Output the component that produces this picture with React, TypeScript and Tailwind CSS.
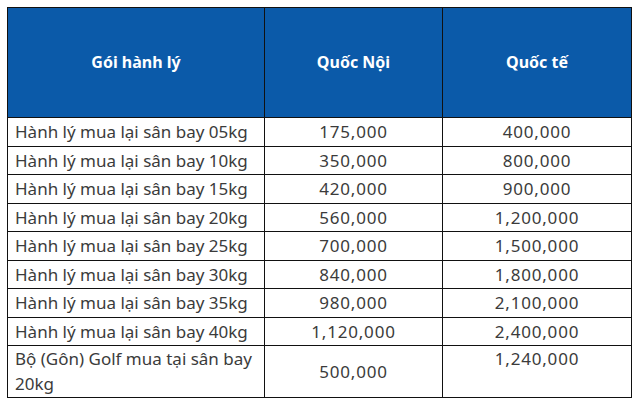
import React from 'react'

const rows = [
    { name: 'Hành lý mua lại sân bay 05kg', noi: '175,000', te: '400,000' },
    { name: 'Hành lý mua lại sân bay 10kg', noi: '350,000', te: '800,000' },
    { name: 'Hành lý mua lại sân bay 15kg', noi: '420,000', te: '900,000' },
    { name: 'Hành lý mua lại sân bay 20kg', noi: '560,000', te: '1,200,000' },
    { name: 'Hành lý mua lại sân bay 25kg', noi: '700,000', te: '1,500,000' },
    { name: 'Hành lý mua lại sân bay 30kg', noi: '840,000', te: '1,800,000' },
    { name: 'Hành lý mua lại sân bay 35kg', noi: '980,000', te: '2,100,000' },
    { name: 'Hành lý mua lại sân bay 40kg', noi: '1,120,000', te: '2,400,000' },
]

const App = () => {
    return (
        <div className="bg-white w-[636px] h-[410px] pt-[7px] pl-[7px] font-['Noto_Sans',sans-serif] text-[#3b3b3b]">
            <table className="border-collapse w-[624px] table-fixed text-[17px] leading-[25px]">
                <colgroup>
                    <col className="w-[257px]" />
                    <col className="w-[178px]" />
                    <col className="w-[189px]" />
                </colgroup>
                <thead>
                    <tr className="bg-[#0b5aa9] text-white font-bold text-[16px] h-[110px]">
                        <th className="border border-[#111] text-center">Gói hành lý</th>
                        <th className="border border-[#111] text-center">Quốc Nội</th>
                        <th className="border border-[#111] text-center">Quốc tế</th>
                    </tr>
                </thead>
                <tbody>
                    {rows.map(row => (
                        <tr key={row.name} className="h-[28.5px]">
                            <td className="border border-[#111] px-[7px] py-0 whitespace-nowrap">{row.name}</td>
                            <td className="border border-[#111] text-center py-0 tracking-[0.8px]">{row.noi}</td>
                            <td className="border border-[#111] text-center py-0 tracking-[0.8px]">{row.te}</td>
                        </tr>
                    ))}
                    <tr>
                        <td className="border border-[#111] px-[7px] pt-0 pb-[1px] align-top">
                            Bộ (Gôn) Golf mua tại sân bay 20kg
                        </td>
                        <td className="border border-[#111] text-center align-middle tracking-[0.8px]">500,000</td>
                        <td className="border border-[#111] text-center align-top tracking-[0.8px]">1,240,000</td>
                    </tr>
                </tbody>
            </table>
        </div>
    )
}

export default App
